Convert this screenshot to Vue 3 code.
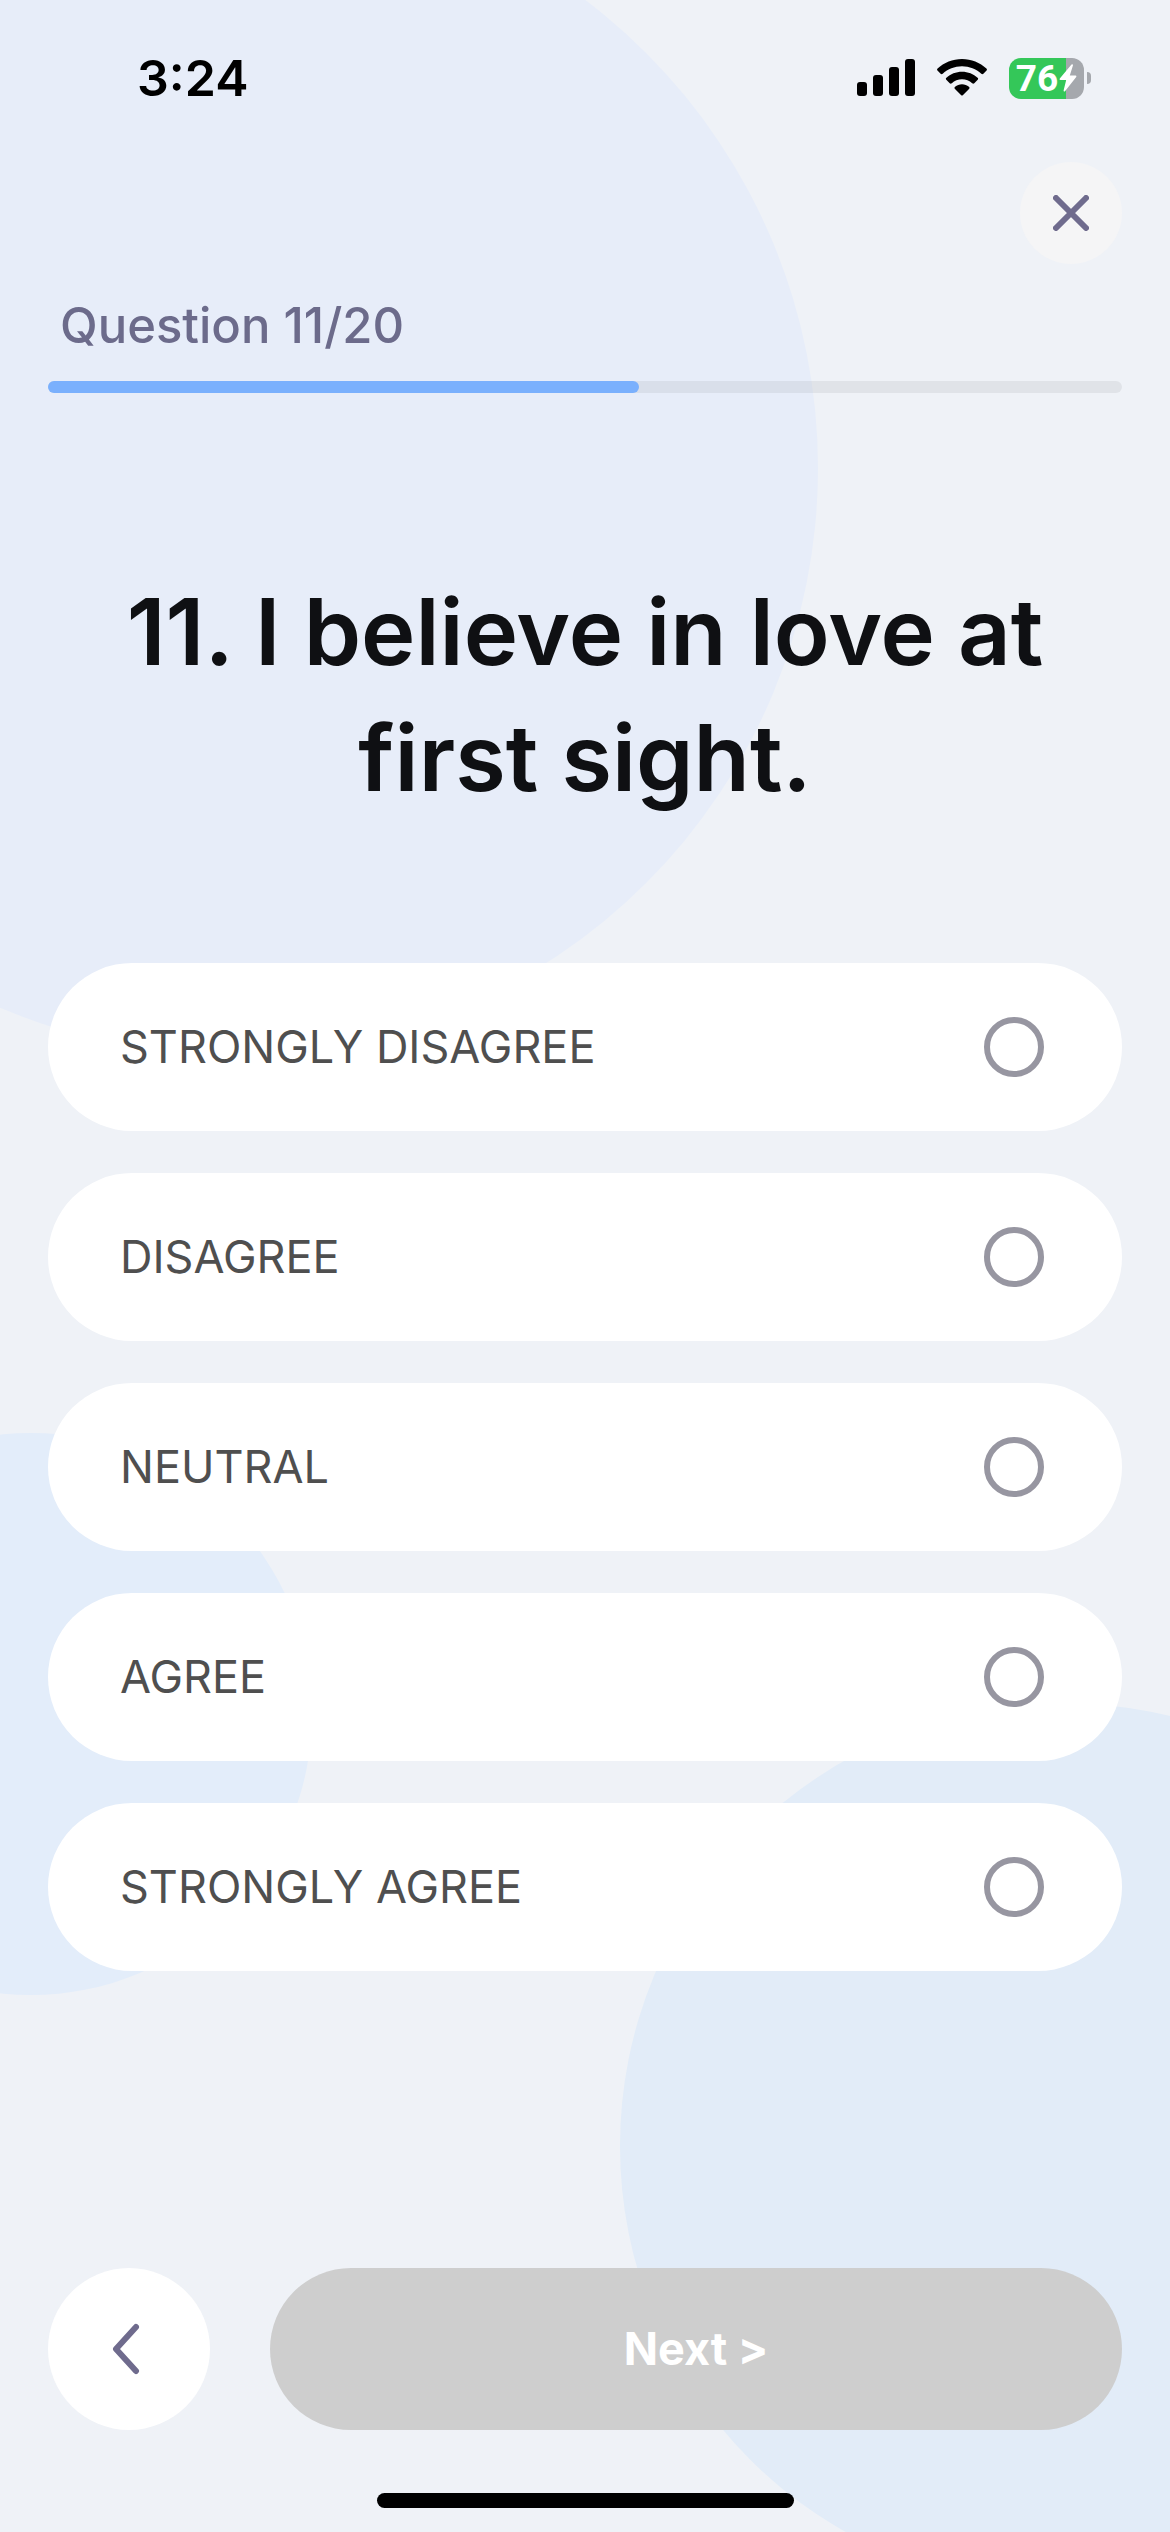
<script setup>
import { computed, ref } from 'vue'

const current = 11
const total = 20
const progress = computed(() => (current / total) * 100)

const options = ['STRONGLY DISAGREE', 'DISAGREE', 'NEUTRAL', 'AGREE', 'STRONGLY AGREE']
const answer = ref('')
</script>

<template>
  <div class="screen">
    <div class="blob blob-top" aria-hidden="true"></div>
    <div class="blob blob-left" aria-hidden="true"></div>
    <div class="blob blob-right" aria-hidden="true"></div>

    <div class="status-bar">
      <span class="time">3:24</span>
      <div class="indicators">
        <svg class="signal" viewBox="0 0 58 38" aria-hidden="true">
          <rect x="0" y="23" width="10" height="14" rx="3" />
          <rect x="16" y="16" width="10" height="21" rx="3" />
          <rect x="32" y="8" width="10" height="29" rx="3" />
          <rect x="48" y="0" width="10" height="37" rx="3" />
        </svg>
        <svg class="wifi" viewBox="0 0 50 38" aria-hidden="true">
          <path d="M25 0C15.600 0 7 3.600 .6 9.500C-.1 10.200-.1 11 .5 11.600L3.600 14.800C4.200 15.400 5 15.400 5.700 14.800C10.800 10.100 17.600 7.300 25 7.300S39.200 10.100 44.300 14.800C45 15.400 45.800 15.400 46.400 14.800L49.500 11.600C50.100 11 50.100 10.200 49.400 9.500C43 3.600 34.400 0 25 0Z" />
          <path d="M25 12.700C19 12.700 13.500 15 9.400 18.700C8.700 19.400 8.700 20.200 9.300 20.800L12.700 24.200C13.300 24.800 14.100 24.800 14.800 24.200C17.500 21.800 21.100 20.300 25 20.300S32.500 21.800 35.200 24.200C35.900 24.800 36.700 24.800 37.300 24.200L40.700 20.800C41.300 20.200 41.300 19.400 40.600 18.700C36.500 15 31 12.700 25 12.700Z" />
          <path d="M25 25.300C22.400 25.300 20 26.200 18.100 27.700C17.300 28.400 17.300 29.200 18 29.900L24 36C24.700 36.700 25.300 36.700 26 36L32 29.900C32.700 29.200 32.700 28.400 31.900 27.700C30 26.200 27.600 25.300 25 25.300Z" />
        </svg>
        <div class="battery">
          <div class="battery-body">
            <span>76</span>
            <svg class="bolt" viewBox="0 0 18 28" aria-hidden="true">
              <path d="M12.500.5L.8 14.500Q0 16 1.600 16H7.200L4.600 26.500Q4.600 28 6 27.200L17.200 13Q18 11.500 16.600 11.500H10.800L14 1.300Q14 0 12.500.5Z" />
            </svg>
          </div>
          <div class="battery-cap"></div>
        </div>
      </div>
    </div>

    <header class="top">
      <button class="close" type="button" aria-label="Close">
        <svg viewBox="0 0 36 36" aria-hidden="true"><path d="M3 3L33 33M33 3L3 33" /></svg>
      </button>
      <p id="step" class="step">Question {{ current }}/{{ total }}</p>
      <div
        class="track"
        role="progressbar"
        aria-labelledby="step"
        :aria-valuenow="current"
        aria-valuemin="0"
        :aria-valuemax="total"
      >
        <div class="fill" :style="{ width: progress + '%' }"></div>
      </div>
    </header>

    <main>
      <h1 id="question">11. I believe in love at first sight.</h1>
      <div class="options" role="radiogroup" aria-labelledby="question">
        <label v-for="option in options" :key="option" class="option">
          <span>{{ option }}</span>
          <input v-model="answer" type="radio" name="answer" :value="option" />
        </label>
      </div>
    </main>

    <footer class="actions">
      <button class="back" type="button" aria-label="Previous question">
        <svg viewBox="0 0 28 52" aria-hidden="true"><path d="M24 4L4 26L24 48" /></svg>
      </button>
      <button class="next" type="button" :disabled="!answer">Next &gt;</button>
    </footer>
    <div class="home-indicator"></div>
  </div>
</template>

<style>
body {
  margin: 0;
}
</style>

<style scoped>
.screen {
  position: relative;
  z-index: 0;
  display: flex;
  flex-direction: column;
  box-sizing: border-box;
  min-height: 100vh;
  padding: 0 48px 24px;
  overflow: hidden;
  background: #eff2f7;
  font-family: Inter, "Liberation Sans", sans-serif;
}

.blob {
  position: absolute;
  z-index: -1;
  border-radius: 50%;
}
.blob-top {
  top: -119px;
  left: -356px;
  width: 1174px;
  height: 1174px;
  background: #e7edf9;
}
.blob-left {
  top: 1433px;
  left: -250px;
  width: 562px;
  height: 562px;
  background: #e3edfa;
}
.blob-right {
  top: 1703px;
  right: -336px;
  width: 886px;
  height: 886px;
  background: #e2ecf8;
}

.status-bar {
  display: flex;
  align-items: center;
  justify-content: space-between;
  height: 156px;
  padding: 0 31px 0 89px;
}
.time {
  font-size: 50px;
  font-weight: 600;
  line-height: 60px;
  color: #000;
}
.indicators {
  display: flex;
  align-items: center;
  gap: 22px;
}
.signal {
  width: 58px;
  height: 38px;
}
.wifi {
  width: 50px;
  height: 38px;
}
.battery {
  display: flex;
  align-items: center;
  gap: 3px;
}
.battery-body {
  display: flex;
  align-items: center;
  justify-content: center;
  gap: 1px;
  width: 75px;
  height: 41px;
  border-radius: 12px;
  background: linear-gradient(90deg, #34c759 76%, #a5a8ad 76%);
  color: #fff;
  font-family: Roboto, Inter, sans-serif;
  font-size: 37px;
  font-weight: 700;
  line-height: 41px;
}
.bolt {
  width: 18px;
  height: 28px;
  fill: #fff;
}
.battery-cap {
  width: 4px;
  height: 12px;
  border-radius: 0 6px 6px 0;
  background: #a5a8ad;
}

.top {
  display: flex;
  flex-direction: column;
  padding-top: 6px;
}
.close {
  display: grid;
  place-items: center;
  align-self: flex-end;
  width: 102px;
  height: 102px;
  padding: 0;
  border: 0;
  border-radius: 50%;
  background: #f5f5f6;
}
.close svg {
  width: 36px;
  height: 36px;
}
.close path,
.back path {
  fill: none;
  stroke: #6f6b8d;
  stroke-width: 6;
  stroke-linecap: round;
  stroke-linejoin: round;
}
.step {
  margin: 30px 12px 23px;
  color: #6c6b8b;
  font-size: 49px;
  font-weight: 500;
  line-height: 64px;
}
.track {
  height: 12px;
  border-radius: 6px;
  background: rgba(0, 0, 0, 0.06);
}
.fill {
  height: 100%;
  border-radius: 6px;
  background: #7ab0fd;
}

h1 {
  margin: 176px 48px 142px;
  color: #0f1013;
  font-size: 92px;
  font-weight: 600;
  line-height: 126px;
  text-align: center;
}
.options {
  display: flex;
  flex-direction: column;
  gap: 42px;
}
.option {
  display: flex;
  align-items: center;
  justify-content: space-between;
  height: 168px;
  padding: 0 78px 0 72px;
  box-sizing: border-box;
  border-radius: 84px;
  background: #fff;
  color: #4f4f4f;
  font-size: 45px;
  line-height: 64px;
}
.option input {
  appearance: none;
  box-sizing: border-box;
  width: 60px;
  height: 60px;
  margin: 0;
  border: 6px solid #9796a1;
  border-radius: 50%;
}
.option input:checked {
  border-width: 18px;
  border-color: #7ab0fd;
}

.actions {
  display: flex;
  gap: 60px;
  margin-top: auto;
  padding-top: 60px;
}
.back,
.next {
  display: flex;
  align-items: center;
  justify-content: center;
  height: 162px;
  padding: 0;
  border: 0;
  border-radius: 81px;
}
.back {
  flex: none;
  width: 162px;
  background: #fff;
}
.back svg {
  width: 28px;
  height: 52px;
  margin-right: 6px;
}
.next {
  flex: 1;
  background: #7ab0fd;
  color: #fff;
  font-family: inherit;
  font-size: 45px;
  font-weight: 700;
  line-height: 64px;
}
.next:disabled {
  background: #cecece;
}
.home-indicator {
  align-self: center;
  width: 417px;
  height: 15px;
  margin-top: 63px;
  border-radius: 8px;
  background: #000;
}
</style>
